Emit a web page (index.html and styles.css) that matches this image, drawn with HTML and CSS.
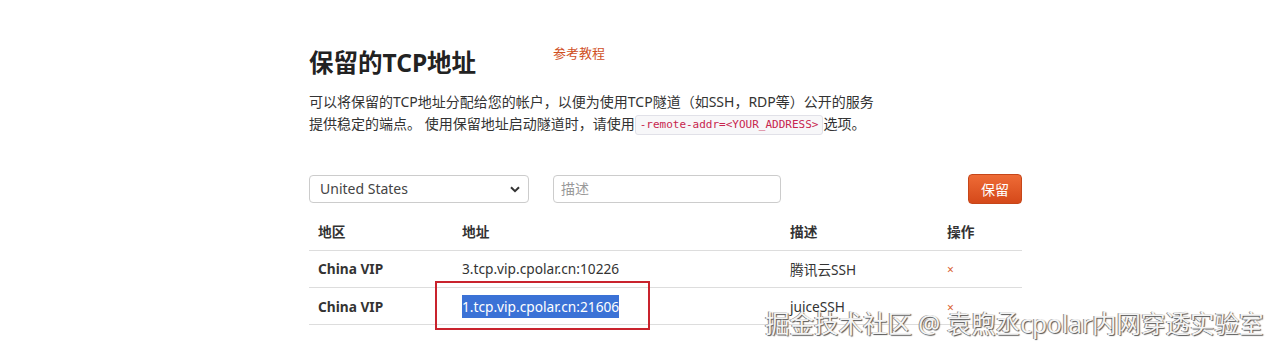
FILE: index.html
```html
<!DOCTYPE html>
<html lang="zh-CN">
<head>
    <meta charset="UTF-8">
    <title>保留的TCP地址</title>
    <link rel="stylesheet" href="styles.css">
</head>
<body>
<div class="page">
    <div class="head">
        <h1 class="title">保留的TCP地址</h1>
        <a class="guide" href="#">参考教程</a>
    </div>
    <p class="intro">可以将保留的TCP地址分配给您的帐户，以便为使用TCP隧道（如SSH，RDP等）公开的服务<br>提供稳定的端点。 使用保留地址启动隧道时，请使用<code>-remote-addr=&lt;YOUR_ADDRESS&gt;</code>选项。</p>

    <!--保留表单-->
    <div class="form">
        <div class="select">
            <span>United States</span>
            <svg class="chev" width="10" height="7" viewBox="0 0 10 7"><path d="M1 1.2l4 4 4-4" fill="none" stroke="#333" stroke-width="2"/></svg>
        </div>
        <div class="input">描述</div>
        <button class="btn">保留</button>
    </div>

    <table class="list">
        <tr>
            <th class="c1">地区</th>
            <th class="c2">地址</th>
            <th class="c3">描述</th>
            <th class="c4">操作</th>
        </tr>
        <tr>
            <td class="region">China VIP</td>
            <td>3.tcp.vip.cpolar.cn:10226</td>
            <td>腾讯云SSH</td>
            <td><span class="del">×</span></td>
        </tr>
        <tr>
            <td class="region">China VIP</td>
            <td><span class="sel">1.tcp.vip.cpolar.cn:21606</span></td>
            <td>juiceSSH</td>
            <td><span class="del">×</span></td>
        </tr>
    </table>
</div>
<div class="mark"></div>
<div class="wm">掘金技术社区 @ 袁煦丞cpolar内网穿透实验室</div>
</body>
</html>
```

FILE: styles.css
```css
* {
    margin: 0;
    padding: 0;
    box-sizing: border-box;
}

body {
    font-family: "Noto Sans", "Noto Sans CJK SC", sans-serif;
    font-size: 14px;
    color: #333;
    background: #fff;
    width: 1278px;
    height: 351px;
    overflow: hidden;
    position: relative;
}

.page {
    width: 713px;
    margin-left: 309px;
    padding-top: 44px;
}

.head {
    display: flex;
    align-items: flex-start;
}

.title {
    width: 244px;
    font-size: 24.5px;
    font-weight: bold;
    line-height: 37px;
    color: #222;
}

.guide {
    color: #d0501f;
    font-size: 13px;
    text-decoration: none;
    line-height: 18px;
}

.intro {
    margin-top: 10px;
    font-size: 14px;
    line-height: 22px;
    color: #333;
}

code {
    font-family: "DejaVu Sans Mono", monospace;
    font-size: 11px;
    line-height: 14px;
    color: #c7254e;
    background: #f7f7f9;
    border: 1px solid #e1e1e8;
    border-radius: 3px;
    padding: 2px 4px;
    display: inline-block;
    vertical-align: 1px;
}

.form {
    display: flex;
    align-items: center;
    margin-top: 39px;
    height: 30px;
}

.select {
    position: relative;
    width: 220px;
    height: 28px;
    border: 1px solid #ccc;
    border-radius: 4px;
    padding-left: 10px;
    line-height: 26px;
    color: #444;
}

.chev {
    position: absolute;
    right: 8px;
    top: 10px;
}

.input {
    width: 228px;
    height: 28px;
    margin-left: 24px;
    border: 1px solid #ccc;
    border-radius: 4px;
    padding-left: 7px;
    line-height: 26px;
    color: #999;
}

.btn {
    margin-left: auto;
    width: 54px;
    height: 30px;
    border: 1px solid #c64619;
    border-radius: 4px;
    background: linear-gradient(#ee6b36, #d5491a);
    color: #fff;
    font-family: inherit;
    font-size: 14px;
}

.list {
    width: 713px;
    margin-top: 8px;
    border-collapse: collapse;
    text-align: left;
    font-size: 13.7px;
}

.list th {
    height: 38px;
    padding-left: 9px;
    font-weight: 600;
    border-bottom: 1px solid #ddd;
}

.list td {
    height: 37.4px;
    padding-left: 9px;
    border-bottom: 1px solid #ddd;
}

.c1 { width: 144px; }
.c2 { width: 328px; }
.c3 { width: 157px; }
.c4 { width: 84px; }

.region {
    font-weight: bold;
}

.del {
    color: #d9602f;
    font-size: 12px;
}

.sel {
    background: #3b72d6;
    color: #fff;
    padding: 2px 0;
}

.mark {
    position: absolute;
    left: 435px;
    top: 281px;
    width: 215px;
    height: 49px;
    border: 2px solid #c9232d;
}

.wm {
    position: absolute;
    left: 765px;
    top: 305px;
    font-size: 24.5px;
    color: #f4f4f4;
    text-shadow: 1px 1px 1px #555, -1px 0 0 #888;
    white-space: nowrap;
}
```
